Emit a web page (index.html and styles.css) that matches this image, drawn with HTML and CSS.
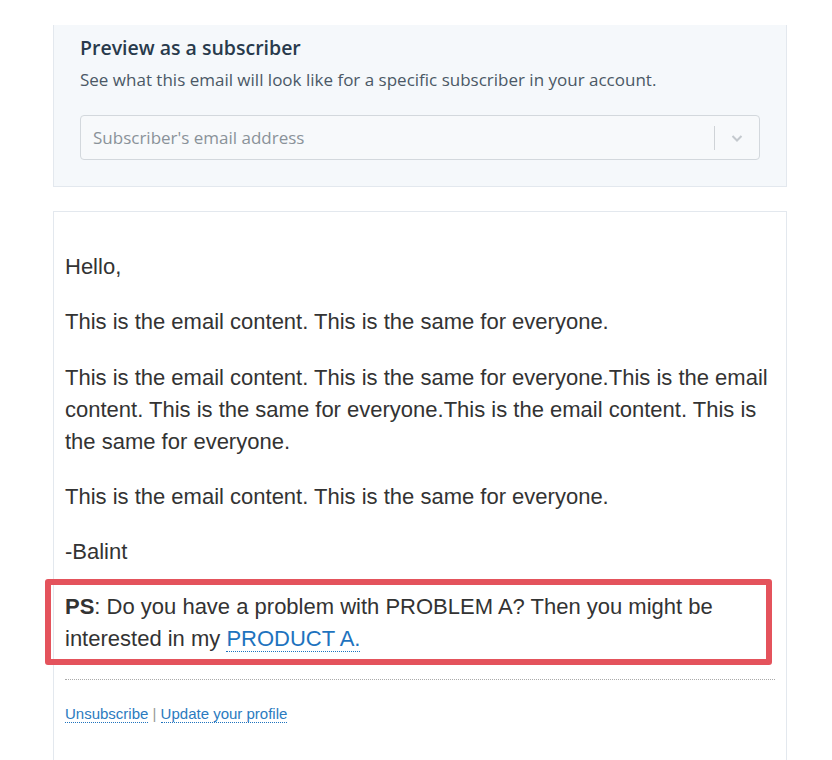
FILE: index.html
```html
<!DOCTYPE html>
<html>

<head>
    <meta http-equiv="content-type" content="text/html; charset=UTF-8">
    <title>
        Preview email
    </title>
    <link rel="stylesheet" href="styles.css">
</head>

<body>

    <div class="page">
        <div class="preview">
            <h3 class="preview-title">Preview as a subscriber</h3>
            <p class="preview-text">See what this email will look like for a specific subscriber in your account.</p>
            <div class="select">
                <input class="select-input" type="text" placeholder="Subscriber's email address">
                <span class="select-sep"></span>
                <span class="select-arrow">
                    <svg width="14" height="14" viewBox="0 0 14 14">
                        <path d="M2.5 5 L7 9.5 L11.5 5" fill="none" stroke="#c4c9ce" stroke-width="2" />
                    </svg>
                </span>
            </div>
        </div>

        <div class="email">
            <p>Hello,</p>
            <p>This is the email content. This is the same for everyone.</p>
            <p>This is the email content. This is the same for everyone.This is the email content. This is the same for everyone.This is the email content. This is the same for everyone.</p>
            <p>This is the email content. This is the same for everyone.</p>
            <p>-Balint</p>
            <p class="ps"><b>PS</b>: Do you have a problem with PROBLEM A? Then you might be interested in my <a href="#">PRODUCT A.</a><span class="highlight"></span></p>
            <div class="footer">
                <a href="#">Unsubscribe</a> | <a href="#">Update your profile</a>
            </div>
        </div>
    </div>

</body>

</html>
```

FILE: styles.css
```css
body {
    margin: 0;
    background-color: white;
}

.page {
    width: 734px;
    margin-left: 53px;
    padding-top: 25px;
}

.preview {
    background-color: #f5f8fb;
    border: 1px solid #e3e8ee;
    border-top: none;
    padding: 9px 26px 26px 26px;
    font-family: "Open Sans", sans-serif;
}

.preview-title {
    margin: 0;
    font-size: 19.5px;
    font-weight: 600;
    line-height: 28px;
    color: #283a4c;
}

.preview-text {
    margin: 7px 0 24px 0;
    font-size: 17px;
    line-height: 22px;
    color: #4b5866;
}

.select {
    display: flex;
    align-items: center;
    height: 45px;
    box-sizing: border-box;
    border: 1px solid #d3d8dd;
    border-radius: 4px;
    background-color: #f7f9fb;
}

.select-input {
    flex: 1;
    border: none;
    background: transparent;
    padding: 0 12px;
    font-family: "Open Sans", sans-serif;
    font-size: 17px;
    color: #333;
    outline: none;
}

.select-input::placeholder {
    color: #8a9299;
}

.select-sep {
    width: 1px;
    height: 24px;
    background-color: #cfd3d7;
}

.select-arrow {
    width: 44px;
    display: flex;
    justify-content: center;
}

.email {
    margin-top: 24px;
    height: 538px;
    border: 1px solid #e3e8ee;
    border-bottom: none;
    padding: 16px 11px 0 11px;
    font-family: "Liberation Sans", Arial, sans-serif;
    color: #333;
}

.email p {
    margin: 23.2px 0;
    font-size: 22px;
    line-height: 32px;
}

.email a {
    color: #1e73be;
    text-decoration: none;
    border-bottom: 1px dotted #1e73be;
}

.ps {
    position: relative;
}

.highlight {
    position: absolute;
    top: -12px;
    left: -20px;
    right: 3px;
    bottom: -10px;
    border: 6px solid #e4535c;
    border-radius: 3px;
}

.footer {
    border-top: 1px dotted #aaa;
    margin-top: 24px;
    padding-top: 25px;
    font-size: 15px;
    color: #999;
}

.footer a {
    color: #2b7bc0;
}
```
